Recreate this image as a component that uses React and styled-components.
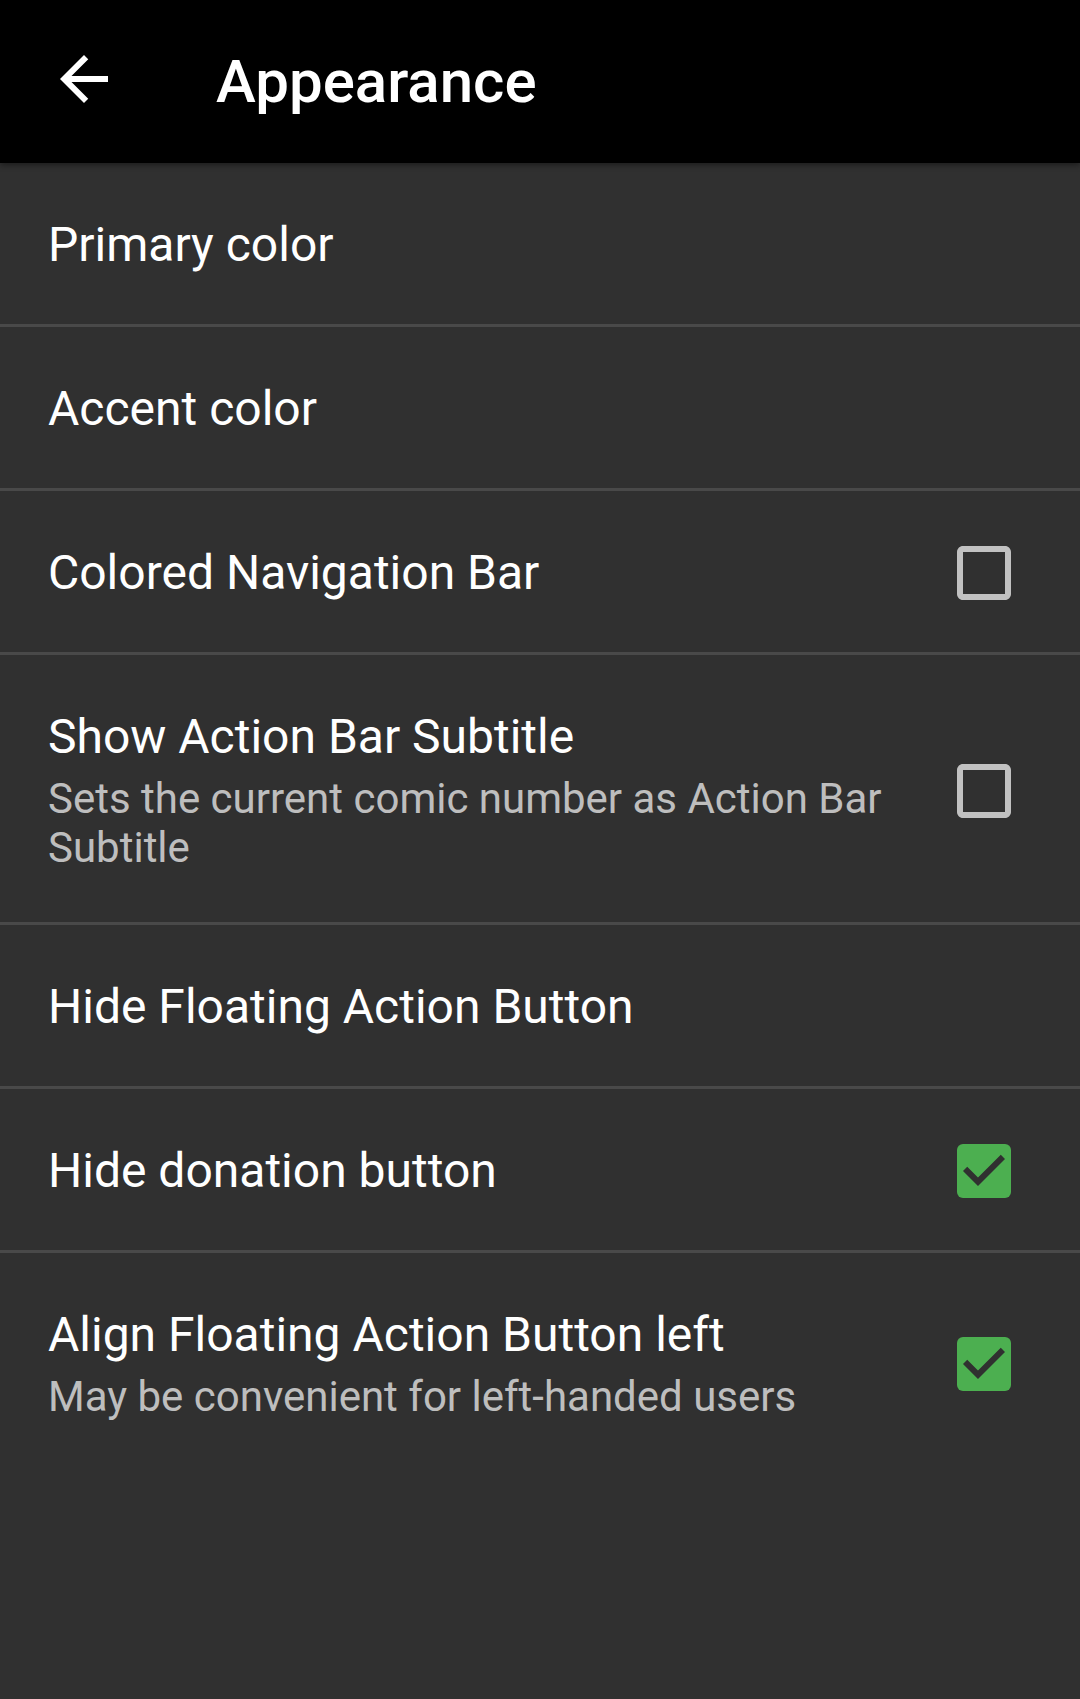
import React from "react";
import styled, { createGlobalStyle } from "styled-components";

const GlobalStyle = createGlobalStyle`
  html, body {
    margin: 0;
    padding: 0;
    background: #303030;
  }
  body {
    font-family: Roboto, "Noto Sans", "Liberation Sans", sans-serif;
    -webkit-font-smoothing: antialiased;
  }
`;

const prefs = [
  { title: "Primary color" },
  { title: "Accent color" },
  { title: "Colored Navigation Bar", checkbox: true, checked: false },
  {
    title: "Show Action Bar Subtitle",
    summary: "Sets the current comic number as Action Bar Subtitle",
    checkbox: true,
    checked: false,
  },
  { title: "Hide Floating Action Button" },
  { title: "Hide donation button", checkbox: true, checked: true },
  {
    title: "Align Floating Action Button left",
    summary: "May be convenient for left-handed users",
    checkbox: true,
    checked: true,
  },
];

function BackArrow() {
  return (
    <svg width="72" height="72" viewBox="0 0 24 24">
      <path
        fill="#ffffff"
        d="M20 11H7.83l5.59-5.59L12 4l-8 8 8 8 1.41-1.41L7.83 13H20v-2z"
      />
    </svg>
  );
}

function CheckBox({ checked }) {
  if (checked) {
    return (
      <BoxIcon viewBox="3 3 18 18">
        <rect x="3" y="3" width="18" height="18" rx="2" fill="#4caf50" />
        <path
          fill="#303030"
          d="M10 17l-5-5 1.41-1.41L10 14.17l7.59-7.59L19 8z"
        />
      </BoxIcon>
    );
  }
  return (
    <BoxIcon viewBox="3 3 18 18">
      <path
        fill="rgba(255,255,255,0.7)"
        d="M19 5v14H5V5h14m0-2H5c-1.1 0-2 .9-2 2v14c0 1.1.9 2 2 2h14c1.1 0 2-.9 2-2V5c0-1.1-.9-2-2-2z"
      />
    </BoxIcon>
  );
}

export default function App() {
  return (
    <Screen>
      <GlobalStyle />
      <Toolbar>
        <NavButton>
          <BackArrow />
        </NavButton>
        <Title>Appearance</Title>
      </Toolbar>
      <List>
        {prefs.map((p, i) => (
          <Row
            key={p.title}
            last={i === prefs.length - 1}
            twoLine={!!p.summary}
          >
            <TextBlock>
              <PrefTitle>{p.title}</PrefTitle>
              {p.summary && <Summary>{p.summary}</Summary>}
            </TextBlock>
            {p.checkbox && <CheckBox checked={p.checked} />}
          </Row>
        ))}
      </List>
    </Screen>
  );
}

const Screen = styled.div`
  min-height: 100vh;
  background: #303030;
  display: flex;
  flex-direction: column;
`;

const Toolbar = styled.header`
  position: relative;
  z-index: 2;
  height: 163px;
  background: #000000;
  display: flex;
  align-items: center;
  box-shadow: 0 2px 6px rgba(0, 0, 0, 0.45);
`;

const NavButton = styled.div`
  width: 72px;
  height: 72px;
  margin-left: 48px;
  margin-bottom: 5px;
  display: flex;
`;

const Title = styled.h1`
  margin: 0 0 0 96px;
  color: #ffffff;
  font-size: 60px;
  font-weight: 500;
  line-height: normal;
`;

const List = styled.div`
  display: flex;
  flex-direction: column;
`;

const Row = styled.div`
  display: flex;
  align-items: center;
  padding: 54px 69px ${(props) => (props.twoLine ? "50px" : "51px")} 48px;
  border-bottom: ${(props) => (props.last ? "none" : "3px solid #494949")};
`;

const TextBlock = styled.div`
  flex: 1;
  min-width: 0;
  padding-right: 40px;
`;

const PrefTitle = styled.div`
  color: #ffffff;
  font-size: 48px;
  line-height: 56px;
`;

const Summary = styled.div`
  margin-top: 9px;
  color: rgba(255, 255, 255, 0.7);
  font-size: 42px;
  line-height: 49px;
`;

const BoxIcon = styled.svg`
  width: 54px;
  height: 54px;
  flex-shrink: 0;
`;
